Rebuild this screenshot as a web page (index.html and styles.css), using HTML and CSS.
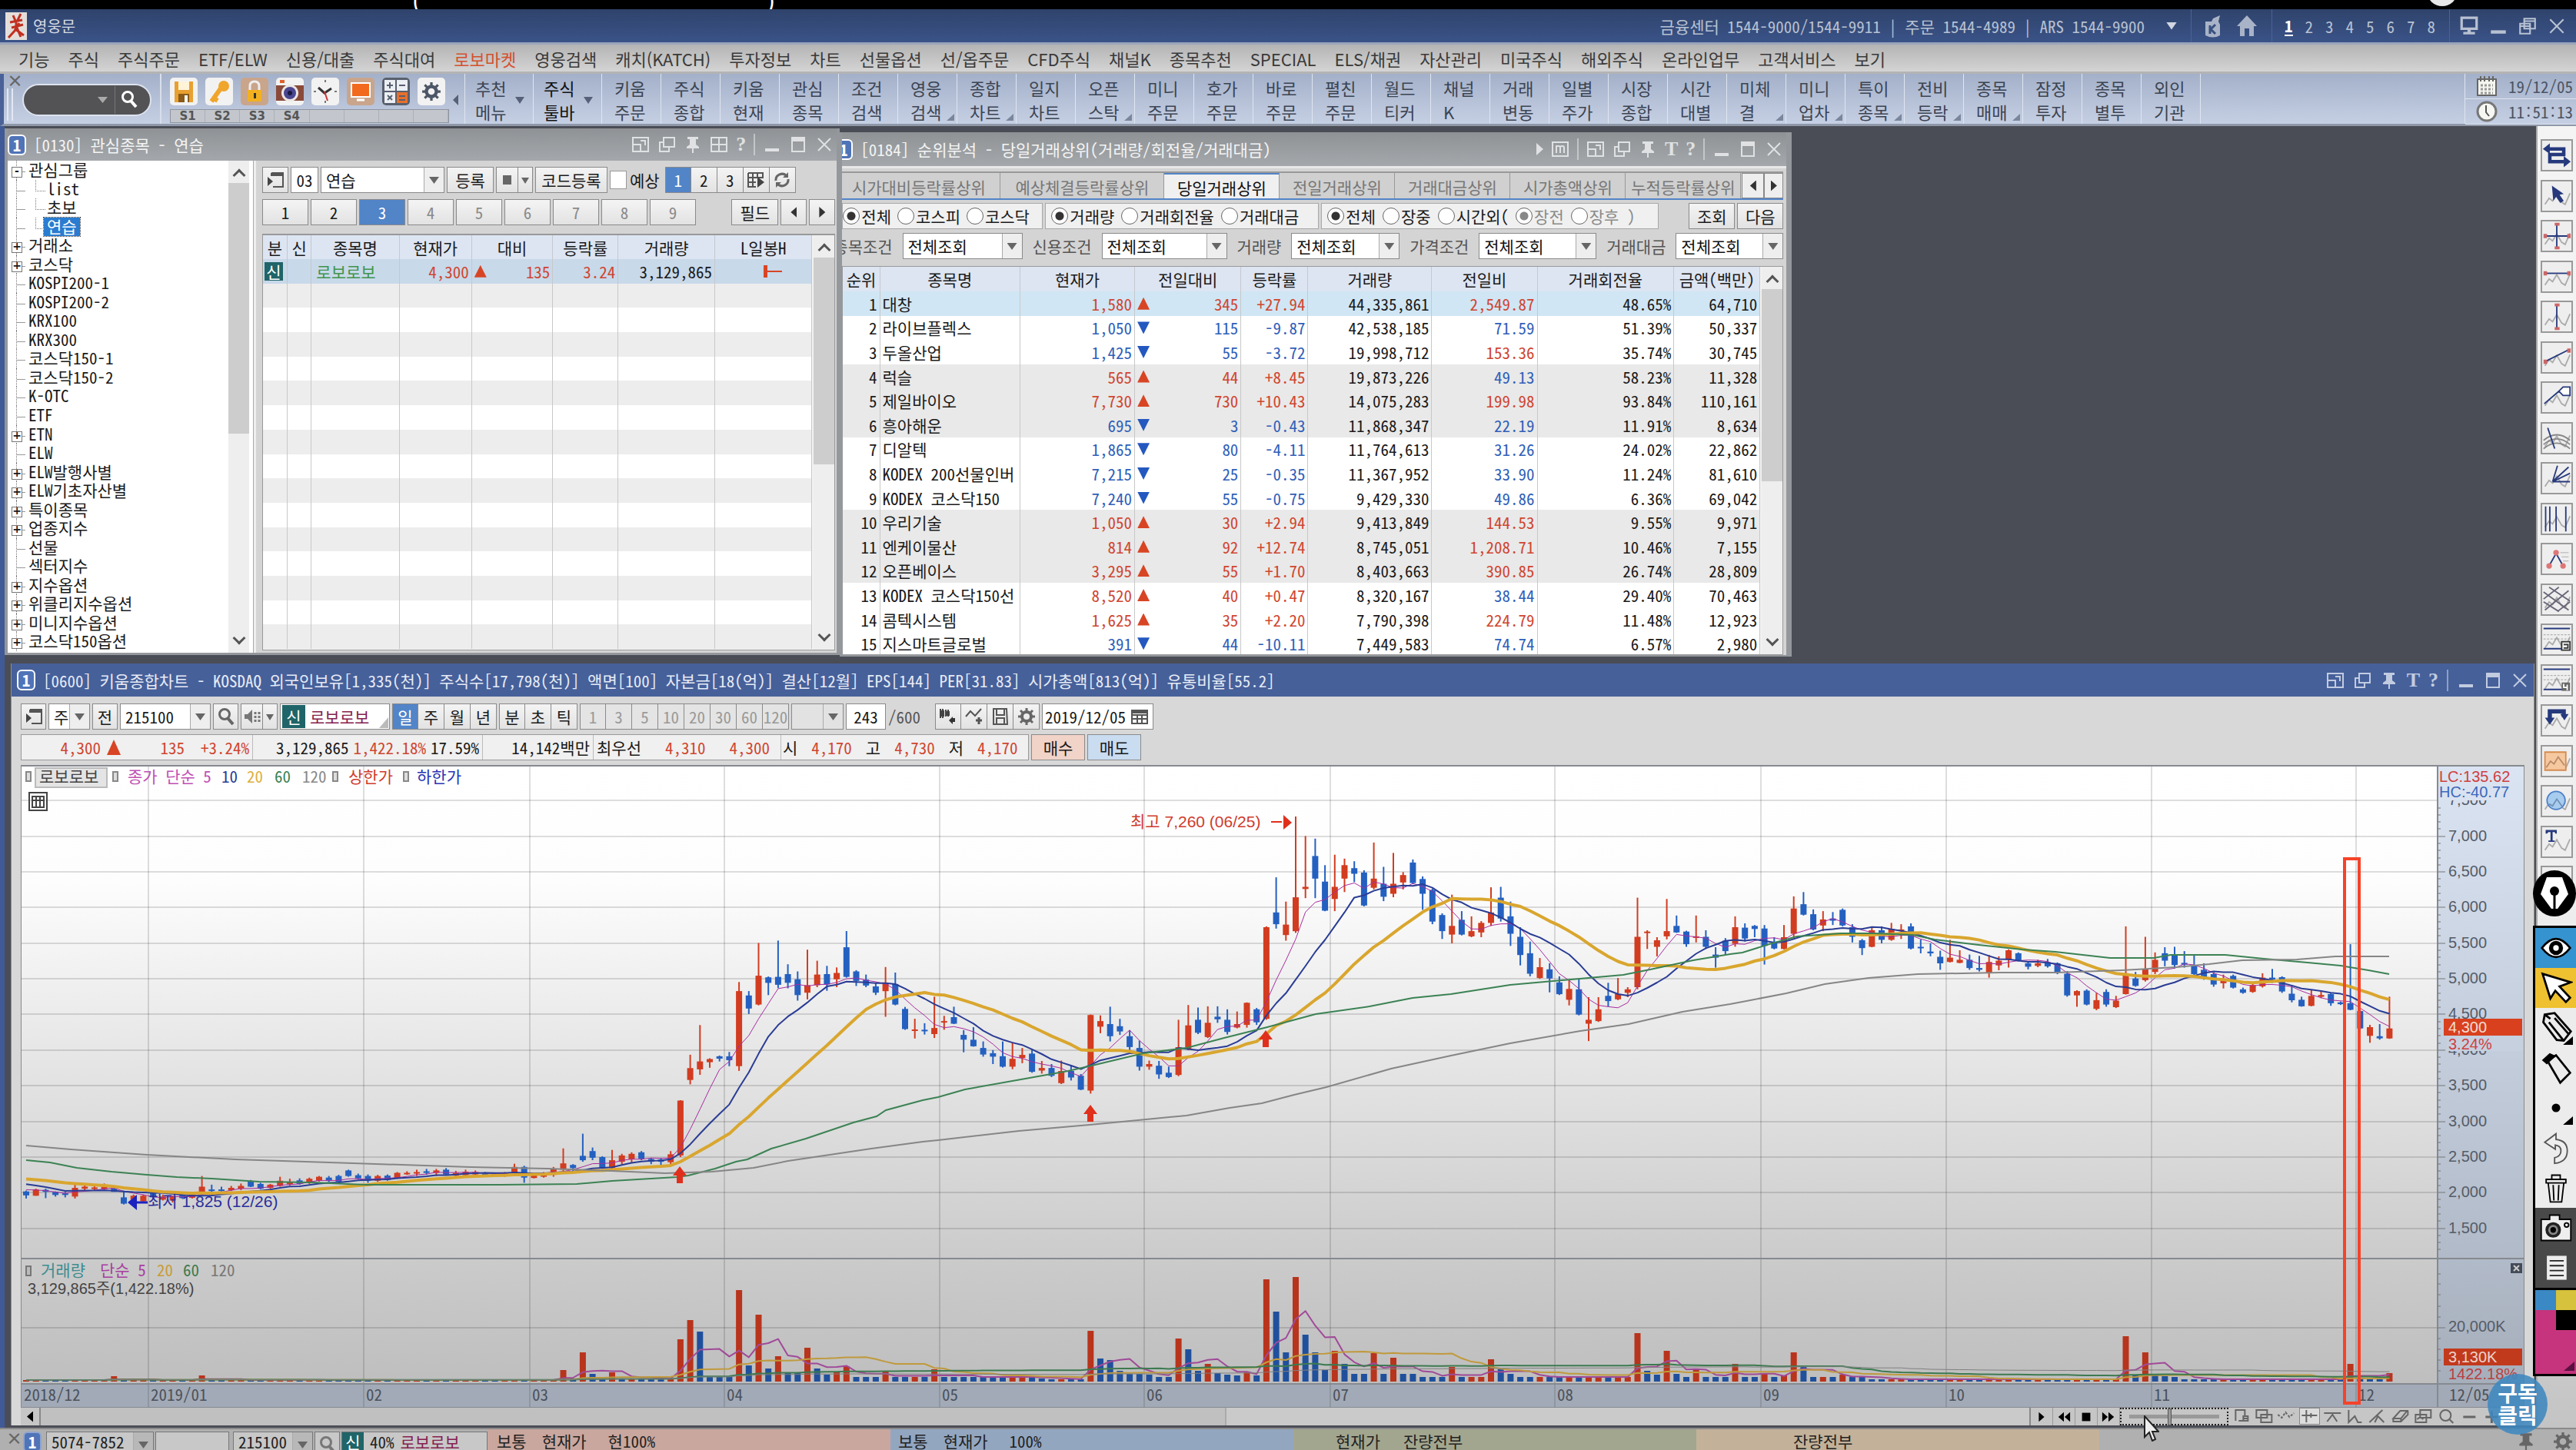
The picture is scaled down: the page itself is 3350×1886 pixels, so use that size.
FILE: index.html
```html
<!DOCTYPE html>
<html lang="ko">
<head>
<meta charset="utf-8">
<title>영웅문</title>
<link rel="stylesheet" href="styles.css">
</head>
<body>
<svg class="defs" aria-hidden="true">
  <symbol id="i-fit" viewBox="0 0 24 24"><path d="M2 3h20v18H2zM2 12h10v9M12 7h6v6" fill="none" stroke="currentColor" stroke-width="2"/></symbol>
  <symbol id="i-copy" viewBox="0 0 24 24"><path d="M8 3h14v12H8zM8 9H3v12h12v-6" fill="none" stroke="currentColor" stroke-width="2"/></symbol>
  <symbol id="i-pin" viewBox="0 0 24 24"><path d="M5 2h14v3h-3v7l4 3v2h-7v6h-2v-6H4v-2l4-3V5H5z" fill="currentColor"/></symbol>
  <symbol id="i-grid" viewBox="0 0 24 24"><path d="M2 3h20v18H2zM12 3v18M2 12h20" fill="none" stroke="currentColor" stroke-width="2"/></symbol>
  <symbol id="i-m" viewBox="0 0 24 24"><path d="M2 3h20v18H2zM7 17V8h3q2 0 2 2v7M12 10q0-2 2-2h1q2 0 2 2v7" fill="none" stroke="currentColor" stroke-width="2"/></symbol>
  <symbol id="i-min" viewBox="0 0 24 24"><path d="M3 17h18v4H3z" fill="currentColor"/></symbol>
  <symbol id="i-max" viewBox="0 0 24 24"><path d="M4 3h16v18H4zM4 6h16" fill="none" stroke="currentColor" stroke-width="2"/><path d="M3 3h18v5H3z" fill="currentColor"/></symbol>
  <symbol id="i-close" viewBox="0 0 24 24"><path d="M4 4l16 16M20 4L4 20" fill="none" stroke="currentColor" stroke-width="2"/></symbol>
  <symbol id="i-search" viewBox="0 0 24 24"><circle cx="10" cy="9" r="6.500" fill="none" stroke="currentColor" stroke-width="3"/><path d="M14 14l7 8" stroke="currentColor" stroke-width="4"/></symbol>
  <symbol id="i-gear" viewBox="0 0 24 24"><circle cx="12" cy="12" r="6" fill="none" stroke="currentColor" stroke-width="4"/><path d="M12 1v5M12 18v5M1 12h5M18 12h5M4 4l4 4M16 16l4 4M20 4l-4 4M8 16l-4 4" stroke="currentColor" stroke-width="3"/></symbol>
  <symbol id="i-panel" viewBox="0 0 24 24"><path d="M7 3h15v18H9M7 3v4" fill="none" stroke="#555" stroke-width="2"/><path d="M7 3h15v4H7z" fill="#555"/><path d="M2 8l7 6-7 6z" fill="#444"/></symbol>
  <symbol id="i-cal" viewBox="0 0 24 24"><path d="M2 4h20v17H2zM2 10h20M2 15h20M9 9v12M15 9v12" fill="none" stroke="#555" stroke-width="2"/><path d="M2 3h20v5H2z" fill="#555"/></symbol>
  <symbol id="i-wave" viewBox="0 0 42 42"><path d="M4 33l6-9 5 4 6-10 7 12 5 3 7-16" fill="none" stroke="#aaa" stroke-width="2"/></symbol>
</svg>

<div class="letterbox"><span>(</span><span>)</span><i></i></div>

<header class="titlebar">
  <svg class="logo" viewBox="0 0 28 36"><path d="M0 0h28v36H0z" fill="#e4dedb"/><path d="M10 4l3 7M20 2l-5 10M6 13l16-3M8 20l15-4M14 10v12L4 33M15 20l5 12M18 14l-5 8 11 8" fill="none" stroke="#c03020" stroke-width="3"/></svg>
  <h1>영웅문</h1>
  <p class="phones">금융센터 1544-9000/1544-9911 | 주문 1544-4989 | ARS 1544-9900</p>
  <button class="tri-down" aria-label="전화번호"></button>
  <div class="tgroup">
    <button aria-label="키움"><svg viewBox="0 0 24 32"><path d="M2 10h8l2-4 9-4-2 8 2 4v14q-9 5-19 0z" fill="#a9b3c8"/><path d="M8 15v11M15 14l-6 6 6 6" stroke="#38507f" stroke-width="3" fill="none"/></svg></button>
    <button aria-label="홈"><svg viewBox="0 0 28 32"><path d="M14 2L1 16h4v13h6V19h6v10h6V16h4z" fill="#a9b3c8"/></svg></button>
  </div>
  <nav class="screens tgroup"><a href="#" class="on">1</a><a href="#">2</a><a href="#">3</a><a href="#">4</a><a href="#">5</a><a href="#">6</a><a href="#">7</a><a href="#">8</a></nav>
  <div class="tgroup wins">
    <button aria-label="모니터"><svg viewBox="0 0 24 24"><path d="M3 2h18v13H3z" fill="none" stroke="currentColor" stroke-width="3"/><path d="M10 15h4v4h5v3H5v-3h5z" fill="currentColor"/></svg></button>
    <button aria-label="최소화"><svg><use href="#i-min"/></svg></button>
    <button aria-label="이전 크기"><svg viewBox="0 0 24 24"><path d="M8 3h13v12H8zM8 6h13M3 9h12v12H3zM3 12h12" fill="none" stroke="currentColor" stroke-width="2"/></svg></button>
    <button aria-label="닫기"><svg><use href="#i-close"/></svg></button>
  </div>
</header>

<nav class="menubar" id="menubar"></nav>

<div class="toolbar">
  <div class="grip"><b>×</b><i></i></div>
  <div class="searchbox"><input aria-label="화면 검색"><span class="caret"></span><button aria-label="검색"><svg><use href="#i-search"/></svg></button></div>
  <div class="quick">
    <div class="apps">
      <button aria-label="저장"><svg viewBox="0 0 36 36"><path d="M6 5h24v27H6z" fill="#e8a030"/><path d="M11 5h14v11H11z" fill="#fff3d8"/><path d="M11 21h14v11H11z" fill="#8a5a18"/><path d="M19 23h4v9h-4z" fill="#fff"/></svg></button>
      <button aria-label="열쇠"><svg viewBox="0 0 36 36"><circle cx="24" cy="11" r="7" fill="#f0a52c"/><path d="M20 14L8 31M10 26l6 4" stroke="#f0a52c" stroke-width="6"/></svg></button>
      <button class="tan" aria-label="잠금"><svg viewBox="0 0 36 36"><path d="M12 16v-5q0-6 6-6t6 6v5" fill="none" stroke="#eee" stroke-width="3"/><path d="M9 16h18v15H9z" fill="#f2b020"/><path d="M17 20h3v7h-3z" fill="#333"/></svg></button>
      <button aria-label="화면 캡처"><svg viewBox="0 0 36 36"><path d="M0 10h36v20H0z" fill="#8a4a3a"/><path d="M5 3h6v4H5z" fill="#e0602c"/><circle cx="18" cy="20" r="11" fill="#ece7e4"/><circle cx="18" cy="20" r="8" fill="#4a4590"/><circle cx="18" cy="20" r="3" fill="#1a1a40"/></svg></button>
      <button aria-label="시계"><svg viewBox="0 0 36 36"><path d="M9 13l8 7 9-6" fill="none" stroke="#333" stroke-width="3"/><path d="M17 18l4 12" stroke="#c33" stroke-width="2"/><path d="M18 3v3M18 30v3M3 18h3M30 18h3" stroke="#777" stroke-width="2"/></svg></button>
      <button class="tan" aria-label="화면"><svg viewBox="0 0 36 36"><path d="M6 7h24v18H6z" fill="#f26a1e" stroke="#fff" stroke-width="2"/><path d="M13 29h10" stroke="#fff" stroke-width="3"/></svg></button>
      <button aria-label="계산기"><svg viewBox="0 0 36 36"><path d="M0 0h36v36H0z" fill="#58606e"/><path d="M3 3h14v14H3zM19 3h14v14H19zM3 19h14v14H3z" fill="#eceff3"/><path d="M19 19h14v14H19z" fill="#e8702c"/><path d="M6 10h8M10 6v8M22 10h8M7 23l6 6M13 23l-6 6M22 24h8M22 29h8" stroke="#58606e" stroke-width="2"/></svg></button>
      <button aria-label="설정"><svg class="gear"><use href="#i-gear"/></svg></button>
    </div>
    <div class="slots"><span>S1</span><span>S2</span><span>S3</span><span>S4</span><span></span><span></span><span></span><span></span></div>
  </div>
  <button class="fold" aria-label="접기"></button>
  <div class="tools" id="tools"></div>
  <div class="clock">
    <p><svg viewBox="0 0 28 28"><path d="M2 5h24v21H2z" fill="#f4f4f0" stroke="#666" stroke-width="2"/><path d="M6 1v7M11 1v7M17 1v7M22 1v7" stroke="#666" stroke-width="2"/><path d="M6 13h16M6 18h16M6 23h16" stroke="#999" stroke-width="3" stroke-dasharray="3 2"/></svg><time>19/12/05</time></p>
    <p><svg viewBox="0 0 28 28"><circle cx="14" cy="14" r="12" fill="#f6f6f2" stroke="#777" stroke-width="3"/><path d="M13 6v9l4 5" fill="none" stroke="#555" stroke-width="2"/></svg><time>11:51:13</time></p>
  </div>
</div>

<main>
  <div class="workspace">
    <div class="upper">
      <section class="win watch">
        <header class="bar"><b class="no">1</b><h2>[0130] 관심종목 - 연습</h2>
          <span class="ctl"><svg><use href="#i-fit"/></svg><svg><use href="#i-copy"/></svg><svg><use href="#i-pin"/></svg><svg><use href="#i-grid"/></svg><em>?</em><s></s><svg><use href="#i-min"/></svg><svg><use href="#i-max"/></svg><svg><use href="#i-close"/></svg></span></header>
        <div class="watch-body">
          <div class="tree-pane"><ul class="tree" id="tree"></ul><div class="vscroll"><i></i></div></div>
          <div class="panel">
            <div class="row">
              <button class="w-sm" aria-label="펼침"><svg><use href="#i-panel"/></svg></button>
              <input class="w-no" value="03" aria-label="그룹 번호">
              <span class="combo w-name"><select aria-label="관심그룹"><option>연습</option></select></span>
              <button class="w-reg">등록</button>
              <span class="split"><button class="stop" aria-label="정지"><i></i></button><button class="tri" aria-label="더보기"></button></span>
              <button class="w-code">코드등록</button>
              <label class="chk"><input type="checkbox">예상</label>
              <span class="split three"><button class="on">1</button><button>2</button><button>3</button><button aria-label="표"><svg viewBox="0 0 24 24"><path d="M2 3h19v7M2 3v18h10M2 9h19M2 15h10M8 3v18M14 3v7" fill="none" stroke="#555" stroke-width="2"/><path d="M14 8l9 7-9 7z" fill="#444"/></svg></button><button aria-label="새로고침"><svg viewBox="0 0 24 24"><path d="M4 13a8 8 0 0 1 14-6M20 11a8 8 0 0 1-14 6" fill="none" stroke="#666" stroke-width="3"/><path d="M20 2v7h-7zM4 22v-7h7z" fill="#666"/></svg></button></span>
            </div>
            <div class="row pages"><button>1</button><button>2</button><button class="on">3</button><button class="dim">4</button><button class="dim">5</button><button class="dim">6</button><button class="dim">7</button><button class="dim">8</button><button class="dim">9</button><span class="grow"></span><button class="w-reg">필드</button><button class="nav-b l" aria-label="이전"></button><button class="nav-b r" aria-label="다음"></button></div>
            <div class="gridwrap">
              <table class="watch-table" id="watch">
                <colgroup><col class="a1"><col class="a2"><col class="a3"><col class="a4"><col class="a5"><col class="a6"><col class="a7"><col class="a8"></colgroup>
                <thead><tr><th>분</th><th>신</th><th>종목명</th><th>현재가</th><th>대비</th><th>등락률</th><th>거래량</th><th>L일봉H</th></tr></thead>
                <tbody><tr class="sel"><td><b class="tag">신</b></td><td></td><td class="green">로보로보</td><td class="num up">4,300</td><td class="up"><span class="chg"><i class="mk-up"></i>135</span></td><td class="num up">3.24</td><td class="num">3,129,865</td><td><i class="bar-h"></i></td></tr></tbody>
              </table>
              <div class="vscroll"><i></i></div>
            </div>
          </div>
        </div>
      </section>

      <section class="win rank">
        <header class="bar"><b class="no">1</b><h2>[0184] 순위분석 - 당일거래상위(거래량/회전율/거래대금)</h2>
          <span class="ctl"><i class="play"></i><svg><use href="#i-m"/></svg><s></s><svg><use href="#i-fit"/></svg><svg><use href="#i-copy"/></svg><svg><use href="#i-pin"/></svg><em>T</em><em>?</em><s></s><svg><use href="#i-min"/></svg><svg><use href="#i-max"/></svg><svg><use href="#i-close"/></svg></span></header>
        <div class="rank-body">
          <div class="tabs"><button class="t1">시가대비등락률상위</button><button class="t2">예상체결등락률상위</button><button class="active">당일거래상위</button><button>전일거래상위</button><button>거래대금상위</button><button>시가총액상위</button><button>누적등락률상위</button><span class="split"><button class="nav-b l" aria-label="이전 탭"></button><button class="nav-b r" aria-label="다음 탭"></button></span></div>
          <div class="row filters">
            <fieldset class="f1"><label><input type="radio" name="m" checked>전체</label><label><input type="radio" name="m">코스피</label><label><input type="radio" name="m">코스닥</label></fieldset>
            <fieldset class="f2"><label><input type="radio" name="k" checked>거래량</label><label><input type="radio" name="k">거래회전율</label><label><input type="radio" name="k">거래대금</label></fieldset>
            <fieldset class="f3"><label><input type="radio" name="t" checked>전체</label><label><input type="radio" name="t">장중</label><label><input type="radio" name="t">시간외(</label><label class="dim"><input type="radio" name="o" checked disabled>장전</label><label class="dim"><input type="radio" name="o" disabled>장후 )</label></fieldset>
            <span class="grow"></span><button class="w-q">조회</button><button class="w-q">다음</button>
          </div>
          <div class="row conds">
            <label class="first" for="c1">종목조건</label><span class="combo c1"><select id="c1"><option>전체조회</option></select></span>
            <label for="c2">신용조건</label><span class="combo c2"><select id="c2"><option>전체조회</option></select></span>
            <label for="c3">거래량</label><span class="combo c3"><select id="c3"><option>전체조회</option></select></span>
            <label for="c4">가격조건</label><span class="combo c4"><select id="c4"><option>전체조회</option></select></span>
            <label for="c5">거래대금</label><span class="combo c5"><select id="c5"><option>전체조회</option></select></span>
          </div>
          <div class="gridwrap">
            <table class="rank-table">
              <colgroup><col class="b1"><col class="b2"><col class="b3"><col class="b4"><col class="b5"><col class="b6"><col class="b7"><col class="b8"><col class="b9"></colgroup>
              <thead><tr><th>순위</th><th>종목명</th><th>현재가</th><th>전일대비</th><th>등락률</th><th>거래량</th><th>전일비</th><th>거래회전율</th><th>금액(백만)</th></tr></thead>
              <tbody id="rank"></tbody>
            </table>
            <div class="vscroll"><i></i></div>
          </div>
        </div>
      </section>
    </div>

    <section class="win chartwin">
      <header class="bar"><b class="no">1</b><h2>[0600] 키움종합차트 - KOSDAQ 외국인보유[1,335(천)] 주식수[17,798(천)] 액면[100] 자본금[18(억)] 결산[12월] EPS[144] PER[31.83] 시가총액[813(억)] 유통비율[55.2]</h2>
        <span class="ctl"><svg><use href="#i-fit"/></svg><svg><use href="#i-copy"/></svg><svg><use href="#i-pin"/></svg><em>T</em><em>?</em><s></s><svg><use href="#i-min"/></svg><svg><use href="#i-max"/></svg><svg><use href="#i-close"/></svg></span></header>
      <div class="row chart-tools">
        <button class="w-ic" aria-label="펼침"><svg><use href="#i-panel"/></svg></button>
        <span class="combo w-ju"><select aria-label="구분"><option>주</option></select></span>
        <button class="w-ic">전</button>
        <span class="combo w-cd"><select aria-label="종목코드"><option>215100</option></select></span>
        <button class="w-ic" aria-label="종목 검색"><svg class="grey"><use href="#i-search"/></svg></button>
        <span class="split"><button class="w-hf" aria-label="소리"><svg viewBox="0 0 24 24"><path d="M2 9h4l6-6v18l-6-6H2z" fill="#777"/><path d="M16 6v3M16 11v3M16 16v3M21 6v3M21 11v3M21 16v3" stroke="#777" stroke-width="3"/></svg></button><button class="tri w-nr" aria-label="소리 설정"></button></span>
        <span class="name"><b class="tag">신</b>로보로보</span>
        <span class="split p3"><button class="on">일</button><button>주</button><button>월</button><button>년</button></span>
        <span class="split p3"><button>분</button><button>초</button><button>틱</button></span>
        <span class="split p3 dim"><button>1</button><button>3</button><button>5</button><button>10</button><button>20</button><button>30</button><button>60</button><button>120</button></span>
        <span class="combo off w-mn"><select aria-label="분 단위" disabled><option></option></select></span>
        <input class="w-ct" value="243" aria-label="봉 개수"><span class="total">/600</span>
        <span class="split p3"><button aria-label="봉"><svg viewBox="0 0 24 24"><path d="M2 2v12M5 2v12M9 3v9M12 3v9" stroke="#444" stroke-width="2"/><path d="M3 4h4v8H3zM10 5h4v6h-4z" fill="#444"/><path d="M21 14h-3v-2l-5 5 5 5v-3h3z" fill="#333"/></svg></button><button aria-label="선"><svg viewBox="0 0 24 24"><path d="M1 12l6-7 6 6 8-9" fill="none" stroke="#555" stroke-width="2"/><path d="M14 17h8M18 13v9" stroke="#555" stroke-width="3"/></svg></button><button aria-label="저장"><svg viewBox="0 0 24 24"><path d="M3 2h17l1 20H3zM7 2h10v8H7zM7 14h10v8H7z" fill="none" stroke="#555" stroke-width="2"/></svg></button><button aria-label="설정"><svg class="grey"><use href="#i-gear"/></svg></button></span>
        <span class="date"><input value="2019/12/05" aria-label="날짜"><svg><use href="#i-cal"/></svg></span>
      </div>
      <div class="row quote">
        <div class="quote-box">
          <p class="q1 up"><span>4,300</span><i class="mk-up"></i><span class="v1">135</span><span class="v2">+3.24%</span></p>
          <p class="q2"><span>3,129,865</span><span class="up">1,422.18%</span><span>17.59%</span></p>
          <p class="q3"><span>14,142백만</span></p>
          <p class="q4"><span>최우선</span><span class="up">4,310</span><span class="up">4,300</span></p>
          <p class="q5"><span>시</span><span class="up">4,170</span><span>고</span><span class="up">4,730</span><span>저</span><span class="up">4,170</span></p>
        </div>
        <button class="buy">매수</button><button class="sell">매도</button>
      </div>
      <svg class="chart" id="chart" viewBox="27 996 3256 836" role="img" aria-label="로보로보 일봉 차트"></svg>
      <div class="hscroll">
        <button class="nav-b l" aria-label="왼쪽"></button><span class="track"></span><span class="thumb"></span>
        <div class="play-ctl">
          <button aria-label="재생"><svg viewBox="0 0 20 20"><path d="M6 3l8 7-8 7z"/></svg></button><button aria-label="뒤로"><svg viewBox="0 0 20 20"><path d="M10 3v14l-8-7zM19 3v14l-8-7z"/></svg></button><button aria-label="정지"><svg viewBox="0 0 20 20"><path d="M4 4h12v12H4z"/></svg></button><button aria-label="앞으로"><svg viewBox="0 0 20 20"><path d="M1 3v14l8-7zM10 3v14l8-7z"/></svg></button>
        </div>
        <input type="range" value="45" aria-label="속도">
        <div class="draw-ctl">
          <svg viewBox="0 0 24 20"><path d="M5 16V2h12v8M9 16h12v-6h-6v6M15 13h6"/></svg><svg viewBox="0 0 24 20"><path d="M2 2h14v10H2zM8 8h14v10H8z"/></svg><svg viewBox="0 0 24 20"><path d="M1 8l5 4 5-7 5 6 6-5" stroke-dasharray="3 2"/></svg><svg viewBox="0 0 24 20" class="pressed"><path d="M2 9h20M8 2v16M14 6v6"/></svg><svg viewBox="0 0 24 20"><path d="M1 6h22M5 17l7-9 6 9"/></svg><svg viewBox="0 0 24 20"><path d="M4 2v16l8-8 4 8h5"/></svg><svg viewBox="0 0 24 20"><path d="M1 18L18 2M8 18l4-8 8 8"/></svg><svg viewBox="0 0 24 20"><path d="M2 13L11 3h9l-8 10zM2 13v4h10v-4M12 17l9-9V3"/></svg><svg viewBox="0 0 24 20"><path d="M8 2h14v10H8zM2 8h14v10H2zM4 14l4-3 4 3"/></svg><svg viewBox="0 0 24 20"><circle cx="11" cy="9" r="7"/><path d="M16 14l5 5"/></svg><svg viewBox="0 0 24 20"><path d="M4 11h16" stroke-width="3"/></svg><svg viewBox="0 0 24 20"><path d="M4 11h16M12 3v16" stroke-width="3"/></svg>
        </div>
      </div>
    </section>
  </div>

  <aside class="side"><div class="side-tools" id="side"></div></aside>

  <div class="palette">
    <button class="pen" aria-label="펜"><svg viewBox="0 0 56 60"><ellipse cx="28" cy="30" rx="28" ry="30"/><path d="M18 9h20l8 22-14 19h-8L10 31z" fill="#fff"/><path d="M28 28v22" stroke="#000" stroke-width="3"/><circle cx="28" cy="27" r="6"/></svg></button>
    <div class="pal-body">
      <button class="blue" aria-label="보기"><svg viewBox="0 0 48 48"><path d="M4 24Q24-2 44 24 24 50 4 24z" fill="#fff" stroke="#000" stroke-width="3"/><circle cx="24" cy="24" r="10"/><circle cx="24" cy="24" r="4" fill="#fff"/></svg></button>
      <button class="yellow" aria-label="선택"><svg viewBox="0 0 48 48"><path d="M5 4l40 12-16 6 15 16-6 6-15-16-7 11z" fill="#fff" stroke="#000" stroke-width="3"/></svg></button>
      <button aria-label="연필"><svg viewBox="0 0 48 48"><path d="M8 5l14-2 23 26-10 13-10-1L6 16zM14 16l20 25M22 10l21 24M8 5l8 6" fill="none" stroke="#000" stroke-width="3"/><path d="M48 48V36L34 48z"/></svg></button>
      <button aria-label="지우개"><svg viewBox="0 0 48 48"><path d="M12 14l12-8 20 25-14 14z" fill="none" stroke="#000" stroke-width="3"/><path d="M4 13L15 3l9 4-13 12z"/></svg></button>
      <button aria-label="굵기"><svg viewBox="0 0 48 48"><circle cx="24" cy="24" r="6"/><path d="M48 48V36L34 48z"/></svg></button>
      <button aria-label="실행 취소"><svg viewBox="0 0 48 48"><path d="M8 16L24 4v8q16 2 16 16 0 16-18 18v-8q9-2 9-10 0-7-8-8v6z" fill="#eee" stroke="#555" stroke-width="2"/></svg></button>
      <button aria-label="삭제"><svg viewBox="0 0 48 48"><path d="M10 12h28v5H10zM18 12V6h12v6M13 18l3 26h16l3-26M20 20l1 22M28 20l-1 22" fill="none" stroke="#000" stroke-width="2"/></svg></button>
      <button class="dark" aria-label="캡처"><svg viewBox="0 0 48 48"><path d="M3 12h12V6h14v6h16v30H3z" fill="#eee" stroke="#000" stroke-width="2"/><circle cx="20" cy="27" r="11" fill="#222"/><circle cx="20" cy="27" r="7" fill="#888"/><circle cx="20" cy="27" r="4"/><circle cx="39" cy="20" r="3" fill="none" stroke="#000" stroke-width="2"/></svg></button>
      <button class="dark" aria-label="목록"><svg viewBox="0 0 48 48"><path d="M11 7h28v34H11z" fill="#eee"/><path d="M15 14h20M15 21h20M15 28h20M15 35h20" stroke="#222" stroke-width="2"/></svg></button>
      <div class="swatches"><i class="s-b"></i><i class="s-y"></i><i class="s-k"></i></div>
    </div>
  </div>
  <div class="bubble">구독<br>클릭</div>
  <svg class="cursor" viewBox="0 0 20 34"><path d="M1 1v27l6-6 4 11 4-2-4-10h8z" fill="#eee" stroke="#222" stroke-width="2"/></svg>
</main>

<footer class="orderbar">
  <b class="x">×</b><b class="no">1</b>
  <span class="combo o1"><select aria-label="계좌"><option>5074-7852</option></select></span>
  <input class="o2" type="password" aria-label="비밀번호">
  <span class="combo o3"><select aria-label="주문 종목"><option>215100</option></select></span>
  <button class="w-ic" aria-label="검색"><svg class="grey"><use href="#i-search"/></svg></button>
  <span class="oname"><b class="tag">신</b><span>40%</span><em>로보로보</em></span>
  <p class="z pink"><span>보통</span><span>현재가</span><span>현100%</span></p>
  <p class="z sky"><span>보통</span><span>현재가</span><span>100%</span></p>
  <p class="z olive"><span>현재가</span><span>잔량전부</span></p>
  <p class="z sand"><span>잔량전부</span></p>
  <span class="grow"></span>
  <svg class="foot-ic"><use href="#i-pin"/></svg><svg class="foot-ic"><use href="#i-gear"/></svg>
</footer>
<script src="script.js"></script>
</body>
</html>
```
FILE: styles.css
```css
* { box-sizing: border-box; margin: 0; padding: 0; }
html { height: 100%; }
body { min-height: 100%; display: flex; flex-direction: column; overflow-x: hidden; background: #3f5a96;
  font: 21px/24px "Noto Sans Mono CJK KR", "Noto Sans CJK KR", monospace; color: #1a1a1a; }
button, input, select { font: inherit; color: inherit; border: 0; background: none; border-radius: 0; }
h1, h2 { font: inherit; white-space: nowrap; }
i, em { font-style: normal; }
ul { list-style: none; }
a { color: inherit; text-decoration: none; }
.defs { position: absolute; width: 0; height: 0; }
.up { color: #cf4630; }
.down { color: #3060b8; }
.dim { color: #8a8a8a; }
.grow { flex: 1; }
.grey { color: #777; }

.letterbox { height: 12px; flex: none; background: #000; color: #fff; overflow: hidden; display: flex; align-items: flex-end; position: relative; padding-left: 534px; gap: 444px; font-size: 32px; line-height: 22px; }
.letterbox i { position: absolute; right: 154px; bottom: 4px; width: 40px; height: 40px; border-radius: 50%; background: #e8e8e8; }

.titlebar { height: 43px; flex: none; display: flex; align-items: center; background: linear-gradient(#2f436b, #3a5388); color: #b8c1d2; padding: 0 12px 0 7px; }
.logo { width: 28px; height: 36px; margin-right: 8px; }
.titlebar h1 { font-size: 20px; color: #d6dbe4; }
.phones { margin-left: auto; margin-right: 28px; white-space: nowrap; }
.tri-down { width: 14px; height: 10px; background: #d0d6e2; clip-path: polygon(0 0, 100% 0, 50% 100%); }
.tgroup { display: flex; align-items: center; height: 43px; margin-left: 18px; border-left: 1px solid #4a629a; padding-left: 14px; gap: 16px; }
.tgroup button svg { width: 28px; height: 32px; display: block; }
.screens { padding-left: 16px; gap: 16px; }
.screens .on { color: #fff; font-weight: bold; border-bottom: 2px solid #fff; }
.wins { gap: 12px; padding-left: 12px; }
.wins button svg { width: 26px; height: 26px; }

.menubar { height: 41px; flex: none; display: flex; align-items: center; gap: 24px; padding: 0 0 0 24px; border-top: 3px solid #9aa4bb; border-bottom: 3px solid #b4b4b4; background: linear-gradient(#b4b4b4, #d4d4d4); white-space: nowrap; font: 22px/24px "Noto Sans CJK KR", sans-serif; color: #3a3a3a; }
.menubar .hot { color: #d4502e; }

.toolbar { height: 68px; flex: none; display: flex; background: linear-gradient(#a3b0c9, #c6d0e4); border-bottom: 3px solid #8f98a8; border-left: 5px solid #4a6298; color: #3c4452; }
.grip { width: 20px; padding-left: 4px; color: #666; line-height: 16px; }
.grip i { display: block; width: 8px; height: 42px; margin-top: 3px; border: 2px solid #e2e8f2; border-width: 0 2px; }
.searchbox { width: 168px; height: 42px; margin: 13px 11px 0 4px; border-radius: 21px; border: 2px solid #dde3ee; background: #535356; display: flex; align-items: center; }
.searchbox input { width: 96px; flex: none; }
.caret { width: 13px; height: 8px; background: #aaa; clip-path: polygon(0 0, 100% 0, 50% 100%); }
.searchbox button { margin-left: 9px; padding-left: 6px; border-left: 1px solid #777; height: 36px; color: #fff; }
.searchbox svg { width: 24px; height: 26px; }
.quick { width: 376px; border-left: 2px solid #d8dfec; padding: 5px 0 0 11px; }
.apps { display: flex; gap: 10px; }
.apps button { width: 36px; height: 36px; border-radius: 5px; background: #f2f2f2; overflow: hidden; }
.apps .tan { background: #c9a58c; }
.apps svg { width: 36px; height: 36px; display: block; }
.apps .gear { width: 26px; height: 26px; margin: 5px; color: #4c5666; }
.slots { display: flex; width: 363px; height: 18px; margin-top: 5px; background: #c3c7cd; border: 1px solid #8e949e; font: bold 15px/16px "DejaVu Sans", sans-serif; color: #555; }
.slots span { flex: 1; text-align: center; border-right: 1px solid #aab0ba; }
.fold { width: 7px; height: 14px; margin: 27px 8px 0 5px; background: #566078; clip-path: polygon(100% 0, 100% 100%, 0 50%); }
.tools { display: flex; }
.tools button { width: 77px; padding: 2px 0 0 16px; text-align: left; line-height: 31px; border-left: 1px solid #dfe5f0; position: relative; font-family: "Noto Sans CJK KR", sans-serif; font-size: 22px; }
.tools button:last-child { border-right: 1px solid #dfe5f0; width: 78px; }
.tools .wide { width: 89px; padding-left: 13px; }
.tools .bold { color: #111; }
.tools .wide::after { content: ""; position: absolute; right: 11px; top: 30px; width: 12px; height: 9px; background: #566078; clip-path: polygon(0 0, 100% 0, 50% 100%); }
.tools .more::after { content: ""; position: absolute; right: 3px; bottom: 4px; width: 10px; height: 9px; background: #7a869c; clip-path: polygon(100% 0, 100% 100%, 0 100%); }
.clock { margin-left: auto; width: 145px; border-left: 1px solid #dfe5f0; color: #4a5464; }
.clock p { height: 33px; display: flex; align-items: center; gap: 14px; padding-left: 14px; border-bottom: 1px solid #dfe5f0; }
.clock svg { width: 28px; height: 28px; }

main { flex: 1; display: flex; position: relative; margin-left: 6px; background: #4b4d56; }
.workspace { flex: 1; min-width: 0; }
.upper { display: flex; align-items: flex-start; height: 699px; }
.win { background: #d6d6d6; overflow: hidden; }
.bar { display: flex; align-items: center; height: 42px; padding-left: 0; background: linear-gradient(#8f9295, #a4a8ac); color: #f4f4f4; }
.no { flex: none; width: 24px; height: 27px; line-height: 23px; margin-right: 10px; border: 2px solid #fff; border-radius: 6px; background: #4f74b8; color: #fff; text-align: center; }
.ctl { margin-left: auto; display: flex; align-items: center; gap: 10px; padding-right: 4px; color: #dfe1e3; }
.ctl svg { width: 24px; height: 24px; }
.ctl em { font: bold 26px/26px "Liberation Serif", serif; }
.ctl s { width: 2px; height: 28px; background: currentColor; opacity: .6; }
.play { width: 9px; height: 16px; background: currentColor; clip-path: polygon(0 0, 100% 50%, 0 100%); }
.row { display: flex; align-items: center; gap: 3px; }
.row button, .row > input, .combo, .name, .date { height: 34px; border: 1px solid #8a8a8a; background: linear-gradient(#f4f4f4, #e2e2e2); white-space: nowrap; flex: none; text-align: center; }
.row > input, .combo { background: #fff; }
.row button svg { width: 24px; height: 24px; display: block; margin: auto; color: #666; }
.row button.on { background: #5284c8; color: #fff; }
.combo { display: flex; position: relative; }
.combo select { appearance: none; width: 100%; padding-left: 6px; }
.combo::before { content: ""; position: absolute; right: 0; top: 0; bottom: 0; width: 25px; border-left: 1px solid #aaa; background: #eee; }
.combo::after { content: ""; position: absolute; right: 6px; top: 12px; width: 13px; height: 9px; background: #666; clip-path: polygon(0 0, 100% 0, 50% 100%); }
.combo.off, .combo.off::before { background: #e2e2e2; }
.split { display: flex; }
.split button + button { border-left-width: 0; }
.stop i { display: block; width: 11px; height: 12px; margin: auto; background: #666; }
.tri { position: relative; width: 19px; }
.tri::after { content: ""; position: absolute; left: 4px; top: 13px; width: 10px; height: 8px; background: #666; clip-path: polygon(0 0, 100% 0, 50% 100%); }
.nav-b { position: relative; width: 34px; }
.nav-b::after { content: ""; position: absolute; left: 50%; top: 50%; width: 8px; height: 14px; margin: -7px 0 0 -4px; background: #333; }
.nav-b.l::after { clip-path: polygon(100% 0, 100% 100%, 0 50%); }
.nav-b.r::after { clip-path: polygon(0 0, 100% 50%, 0 100%); }
.vscroll { flex: none; width: 27px; background: #eee; position: relative; padding: 29px 0; }
.vscroll i { display: block; height: 56%; background: #cdcdcd; }
.vscroll::before, .vscroll::after { content: ""; position: absolute; left: 8px; width: 9px; height: 9px; border: solid #555; border-width: 3px 0 0 3px; transform: rotate(45deg); }
.vscroll::before { top: 13px; }
.vscroll::after { bottom: 13px; transform: rotate(225deg); }

.watch { width: 33%; margin-top: 3px; height: 685px; border: solid #94979b; border-width: 0 4px 3px; }
.watch-body { display: flex; height: 640px; }
.tree-pane { width: 320px; display: flex; background: #fff; padding-right: 5px; overflow: hidden; border-right: 1px solid #aaa; }
.tree { flex: 1; height: 638px; display: grid; grid-template-rows: repeat(26, minmax(0, 1fr)); grid-auto-rows: 0; }
.tree li { position: relative; padding-left: 27px; white-space: nowrap; line-height: 22px; }
.tree li::before { content: ""; position: absolute; left: 11px; top: 0; bottom: 0; width: 13px; border-left: 1px dotted #777; background: linear-gradient(#999, #999) 0 14px / 11px 1px no-repeat; }
.tree .box::after { content: "+"; position: absolute; left: 5px; top: 8px; width: 12px; height: 12px; border: 1px solid #777; background: #fff; font: bold 14px/9px "DejaVu Sans", sans-serif; text-align: center; }
.tree .open::after { content: "-"; }
.tree .sub { padding-left: 51px; }
.tree .sub::after { content: ""; position: absolute; left: 36px; top: 0; height: 14px; width: 12px; border: dotted #777; border-width: 0 0 1px 1px; }
.tree .pick span { background: #2a7cd0; color: #fff; outline: 1px dotted #333; display: inline-block; height: 24px; padding: 0 4px; margin-left: -4px; }
.panel { flex: 1; min-width: 0; display: flex; flex-direction: column; padding: 8px 2px 3px 8px; background: #d4d4d4; border-left: 3px solid #eee; }
.pages { margin-top: 8px; padding-bottom: 11px; border-bottom: 1px solid #999; }
.pages button { width: 60px; }
.w-sm { width: 34px; }
.w-hf { width: 29px; }
.w-no { width: 36px; padding: 0 6px; }
.w-name { width: 161px; }
.pages .w-reg, .w-reg { width: 61px; }
.pages .nav-b { width: 34px; }
.w-code { width: 94px; }
.chk { display: flex; align-items: center; gap: 4px; margin-right: 4px; white-space: nowrap; }
.chk input { appearance: none; width: 22px; height: 24px; background: #fff; border: 1px solid #999; }
.three button { width: 34px; }
.split:not(.three) > button:first-child { min-width: 29px; }
.gridwrap { flex: 1; min-height: 0; display: flex; align-items: stretch; gap: 2px; border: 1px solid #999; background: #f2f2f2; overflow: hidden; }
table { flex: 1; width: 100%; border-collapse: collapse; table-layout: fixed; }
th { font-weight: normal; background: #dde5f2; border-right: 1px solid #c4c8d0; white-space: nowrap; overflow: hidden; }
td { border-right: 1px solid #c8c8c8; white-space: nowrap; overflow: hidden; padding: 0 3px; }
.watch-table { height: 538px; background: #fff; }
.watch-table tr { height: 31px; }
.watch-table tbody tr:nth-child(even) { background: #ededed; }
.watch-table .sel { background: #c8d9ea; }
.watch-table .green { color: #3f9448; padding-left: 6px; }
.a1, .a2 { width: 4.4%; } .a3 { width: 16%; } .a4 { width: 13.2%; } .a5 { width: 14.8%; } .a6 { width: 11.9%; } .a7 { width: 17.6%; } .a8 { width: 17.7%; }
.num { text-align: right; }
.tag { display: inline-block; background: #1f6468; color: #fff; font-weight: normal; width: 24px; text-align: center; overflow: hidden; }
.watch-table td:first-child { padding: 0 2px; line-height: 0; }
.watch-table .tag { line-height: 24px; }
.chg { display: flex; align-items: center; justify-content: space-between; }
.mk-up, .mk-dn { width: 16px; height: 16px; display: inline-block; }
.mk-up { background: #d84524; clip-path: polygon(50% 0, 100% 100%, 0 100%); }
.mk-dn { background: #2458c0; clip-path: polygon(0 0, 100% 0, 50% 100%); }
.bar-h { display: block; width: 24px; height: 16px; margin-left: 60px; border-left: 5px solid #d84524; background: linear-gradient(#d84524, #d84524) 0 7px / 100% 2px no-repeat; }

.rank { width: 37%; flex: 0 1 1238px; margin-top: 8px; height: 682px; border: solid #94979b; border-width: 0 7px 2px 3px; }
.rank .bar { height: 44px; }
.rank .no { margin-left: -10px; }
.rank-body { height: 636px; background: #d4d4d4; border-top: 3px solid #e8e8e8; padding: 4px 4px 0 0; display: flex; flex-direction: column; }
.tabs { display: flex; border-bottom: 2px solid #5284c8; border-top: 2px solid #999; height: 37px; color: #777; position: relative; overflow: hidden; flex: none; }
.tabs > button { flex: 0 0 150px; height: 35px; background: #d0d0d0; border-right: 1px solid #999; white-space: nowrap; text-align: center; overflow: hidden; }
.tabs .t1 { flex-basis: 206px; padding-right: 6px; }
.tabs .t2 { flex-basis: 213px; }
.tabs .active { background: #f0f0f0; color: #111; border-top: 2px solid #5284c8; }
.tabs .split { position: absolute; right: 0; top: 0; }
.tabs .split button { width: 25px; height: 33px; background: #eee; border: 1px solid #888; }
.filters { margin-top: 4px; flex: none; }
fieldset { height: 34px; display: flex; align-items: center; background: #f0f0f0; border: 1px solid #a8a8a8; gap: 4px; flex: none; overflow: hidden; }
fieldset label { display: flex; align-items: center; gap: 2px; white-space: nowrap; }
.f1 { width: 261px; } .f2 { width: 356px; } .f3 { width: 439px; }
.f1 { gap: 8px; } .f2, .f3 { padding-left: 7px; gap: 9px; }
input[type=radio] { appearance: none; width: 22px; height: 22px; border: 1px solid #666; border-radius: 50%; background: #fff; flex: none; }
input[type=radio]:checked { background: radial-gradient(#333 0 5px, #fff 6px); }
input[type=radio]:disabled:checked { background: radial-gradient(#888 0 5px, #fff 6px); }
.w-q { width: 60px; }
.conds { margin-top: 5px; color: #555; gap: 5px; justify-content: space-between; flex: none; white-space: nowrap; }
.conds .first { margin-left: -12px; }
.conds .combo { color: #111; }
.c1 { width: 156px; } .c2 { width: 163px; } .c3 { width: 141px; } .c4 { width: 153px; } .c5 { width: 140px; }
.rank .gridwrap { margin-top: 9px; }
.rank-table { height: 506px; background: #fff; }
.rank-table th { height: 32px; }
.rank-table .g { background: #e9e9e9; }
.rank-table .sel { background: #d0e6f4; }
.b1 { width: 4%; } .b2 { width: 15.3%; } .b3 { width: 12.5%; } .b4 { width: 11.6%; } .b5 { width: 7.3%; } .b6 { width: 13.5%; } .b7 { width: 11.5%; } .b8 { width: 14.9%; } .b9 { width: 9.4%; }

.chartwin { margin: 0 2px 0 8px; border: solid #8f8f8f; border-width: 0 1px; padding: 0 12px; background: #d8d8d8; }
.chartwin .bar { height: 43px; margin: 0 -12px; background: #46609a; color: #e6ebf5; padding-left: 7px; }
.chartwin .ctl { color: #c2cce0; padding-right: 6px; gap: 11px; }
.chart-tools { margin-top: 9px; }
.w-ic { width: 33px; }
.w-ju { width: 54px; } .w-cd { width: 118px; } .w-nr { width: 19px; } .w-mn { width: 68px; }
.name { width: 143px; display: flex; align-items: center; gap: 6px; color: #86204e; background: #fff !important; position: relative; }
.name .tag { width: 30px; height: 30px; line-height: 30px; margin-left: 2px; }
.name::after { content: ""; position: absolute; right: 1px; bottom: 1px; width: 12px; height: 14px; background: #bbb; clip-path: polygon(100% 0, 100% 100%, 0 100%); }
.p3 button { width: 34px; overflow: hidden; }
.p3.dim button { background: #e4e4e4; color: #999; }
.w-ct { width: 52px; text-align: right; padding: 0 2px; }
.total { margin: 0 16px 0 0; color: #555; }
.date { width: 145px; display: flex; align-items: center; background: #fff !important; }
.date input { width: 110px; padding-left: 3px; }
.date svg { width: 24px; height: 24px; margin-left: 4px; }
.quote { margin-top: 6px; margin-bottom: 6px; }
.quote-box { display: flex; height: 34px; width: 1311px; border: 1px solid #999; background: #f0f0f0; align-items: center; }
.quote-box p { display: flex; align-items: center; height: 32px; border-right: 1px solid #bbb; white-space: nowrap; justify-content: flex-end; padding-right: 4px; }
.q1 { width: 301px; } .q2 { width: 299px; gap: 6px; } .q3 { width: 144px; } .q4 { width: 244px; }
.quote-box .q4 { justify-content: space-between; padding: 0 14px 0 4px; }
.quote-box .q5 { border: 0; gap: 18px; padding-left: 2px; }
.v1 { width: 93px; text-align: right; } .v2 { width: 84px; text-align: right; }
.q1 .mk-up { margin-left: 8px; width: 18px; height: 20px; margin-right: -10px; }
.row .buy { width: 70px; background: #f1d3c8; }
.row .sell { width: 70px; background: #c9dcf0; }
.chart { display: block; width: 100%; height: auto; }
.chart text { font: 20px "Liberation Sans", "Noto Sans CJK KR", sans-serif; }
.chart .note text { font-size: 21px; }
.chart .mono text { font: 21px "Noto Sans Mono CJK KR", "Noto Sans CJK KR", monospace; }
.hscroll { height: 23px; display: flex; background: #c6c6c6; }
.hscroll > .nav-b { width: 26px; border-right: 2px solid #888; }
.hscroll .nav-b::after { background: #000; }
.track { flex: 0 1 1540px; background: #c0c0c0; }
.thumb { flex: 1; border-left: 2px solid #aaa; background: #cacaca; }
.play-ctl { display: flex; border-left: 2px solid #888; }
.play-ctl button { width: 29px; border-right: 1px solid #999; }
.play-ctl svg { width: 20px; height: 18px; }
.hscroll input { width: 141px; appearance: none; border: 2px dotted #222; }
.hscroll input::-webkit-slider-runnable-track { height: 5px; background: #999; margin: 0 10px; }
.hscroll input::-webkit-slider-thumb { appearance: none; width: 5px; height: 22px; margin-top: -8px; background: #999; border: 1px solid #555; }
.draw-ctl { display: flex; gap: 5px; padding: 1px 30px 0 4px; width: 385px; justify-content: space-between; }
.draw-ctl svg { width: 25px; height: 20px; fill: none; stroke: #666; stroke-width: 2; }
.draw-ctl .pressed { background: #ddd; outline: 1px solid #888; }

.side { width: 52px; flex: none; background: linear-gradient(#f4f4f4, #eee 60%, #c4c4c4); border-left: 2px solid #aaa; padding-top: 17px; }
.side-tools { display: flex; flex-direction: column; justify-content: space-between; align-items: center; height: 987px; }
.side-tools button { width: 42px; height: 42px; border: 2px solid #999; background: #eee; }
.side-tools svg { width: 38px; height: 38px; display: block; }
.palette { position: absolute; right: 0; top: 968px; width: 56px; }
.pen { display: block; width: 56px; height: 60px; margin-bottom: 12px; }
.pen svg { width: 56px; height: 60px; }
.pal-body { border: 3px solid #000; background: #ececec; border-right: 0; }
.pal-body button { display: flex; align-items: center; justify-content: center; width: 100%; height: 52px; }
.pal-body svg { width: 44px; height: 44px; }
.pal-body .blue { background: #3593d0; } .pal-body .yellow { background: #efc030; } .pal-body .dark { background: #494949; }
.swatches { height: 112px; border-top: 3px solid #000; background: #c5347c; display: grid; grid-template: 26px 26px 1fr / 1fr 1fr; position: relative; }
.s-b { background: #3a88c4; } .s-y { background: #d6c23c; } .s-k { grid-area: 2 / 2; background: #000; }
.swatches::after { content: ""; position: absolute; right: 2px; bottom: 4px; width: 14px; height: 12px; background: #5a1040; clip-path: polygon(100% 0, 100% 100%, 0 100%); }
.bubble { position: absolute; right: 37px; bottom: -9px; width: 78px; height: 79px; border-radius: 50%; background: #3f88bfe0; color: #fff; text-align: center; font: bold 28px/29px "Noto Sans CJK KR", sans-serif; padding-top: 10px; z-index: 2; }
.cursor { position: absolute; left: 83.2%; bottom: -18px; width: 20px; height: 34px; z-index: 2; }

.orderbar { height: 29px; flex: none; overflow: hidden; display: flex; align-items: flex-start; gap: 2px; background: #b0b0b0; border-top: 2px solid #8a8a8a; padding: 3px 4px 0 8px; color: #222; white-space: nowrap; }
.orderbar .x { width: 20px; color: #666; line-height: 16px; }
.orderbar .no { border-color: #8fa4d0; margin: 0 4px 0 0; }
.orderbar .combo, .orderbar input, .orderbar .w-ic { height: 36px; background: #c8c8c8; border: 1px solid #777; }
.orderbar select { height: 24px; line-height: 24px; }
.orderbar .combo::before { background: #b8b8b8; }
.o1 { width: 140px; } .o2 { width: 96px; } .o3 { width: 104px; margin-left: 3px; }
.orderbar .w-ic svg { width: 24px; height: 24px; }
.oname { display: flex; width: 190px; height: 36px; background: #c8c8c8; border: 1px solid #777; gap: 8px; }
.oname .tag { width: 28px; } .oname em { color: #86204e; }
.z { height: 34px; margin-top: -3px; padding-top: 3px; display: flex; gap: 20px; flex: 0 1 524px; margin-left: -2px; }
.pink { background: #c9a79e; padding-left: 12px; } .sky { background: #93a6c0; padding-left: 10px; } .olive { background: #a3a68f; padding-left: 55px; gap: 30px; } .sand { background: #c3b199; padding-left: 126px; }
.pink span:last-child, .sky span:last-child { margin-left: 8px; }
.foot-ic { width: 26px; height: 26px; color: #666; margin-right: 20px; }
.foot-ic:last-child { margin-right: 0; }
```
FILE: script.js
```js
const $ = id => document.getElementById(id);

$('menubar').innerHTML = '기능,주식,주식주문,ETF/ELW,신용/대출,주식대여,로보마켓,영웅검색,캐치(KATCH),투자정보,차트,선물옵션,선/옵주문,CFD주식,채널K,종목추천,SPECIAL,ELS/채권,자산관리,미국주식,해외주식,온라인업무,고객서비스,보기'
  .split(',').map(t => `<a href="#"${t === '로보마켓' ? ' class="hot"' : ''}>${t}</a>`).join('');

$('tools').innerHTML = '추천 메뉴 wide,주식 툴바 wide_bold,키움 주문,주식 종합,키움 현재,관심 종목,조건 검색,영웅 검색 more,종합 차트 more,일지 차트,오픈 스탁 more,미니 주문,호가 주문,바로 주문,펼친 주문,월드 티커,채널 K,거래 변동,일별 주가,시장 종합,시간 대별,미체 결 more,미니 업차 more,특이 종목 more,전비 등락 more,종목 매매 more,잠정 투자,종목 별투,외인 기관'
  .split(',').map(t => { const [a, b, c = ''] = t.split(' '); return `<button class="${c.replace('_', ' ')}">${a}<br>${b}</button>`; }).join('');

// Prefix: "-" opened group, "+" closed group, ">" child, "*" selected child.
$('tree').innerHTML = '-관심그룹,>list,>초보,*연습,+거래소,+코스닥,KOSPI200-1,KOSPI200-2,KRX100,KRX300,코스닥150-1,코스닥150-2,K-OTC,ETF,+ETN,ELW,+ELW발행사별,+ELW기초자산별,+특이종목,+업종지수,선물,섹터지수,+지수옵션,+위클리지수옵션,+미니지수옵션,+코스닥150옵션'
  .split(',').map(t => {
    const cls = { '-': 'box open', '+': 'box', '>': 'sub', '*': 'sub pick' }[t[0]];
    return `<li class="${cls || ''}"><span>${cls ? t.slice(1) : t}</span></li>`;
  }).join('');

$('watch').tBodies[0].insertAdjacentHTML('beforeend', ('<tr>' + '<td></td>'.repeat(8) + '</tr>').repeat(15));

$('rank').innerHTML = `대창|1,580|345|+27.94|44,335,861|2,549.87|48.65|64,710
라이브플렉스|1,050|115|-9.87|42,538,185|71.59|51.39|50,337
두올산업|1,425|55|-3.72|19,998,712|153.36|35.74|30,745
럭슬|565|44|+8.45|19,873,226|49.13|58.23|11,328
제일바이오|7,730|730|+10.43|14,075,283|199.98|93.84|110,161
흥아해운|695|3|-0.43|11,868,347|22.19|11.91|8,634
디알텍|1,865|80|-4.11|11,764,613|31.26|24.02|22,862
KODEX 200선물인버|7,215|25|-0.35|11,367,952|33.90|11.24|81,610
KODEX 코스닥150|7,240|55|-0.75|9,429,330|49.86|6.36|69,042
우리기술|1,050|30|+2.94|9,413,849|144.53|9.55|9,971
엔케이물산|814|92|+12.74|8,745,051|1,208.71|10.46|7,155
오픈베이스|3,295|55|+1.70|8,403,663|390.85|26.74|28,809
KODEX 코스닥150선|8,520|40|+0.47|8,320,167|38.44|29.40|70,463
콤텍시스템|1,625|35|+2.20|7,790,398|224.79|11.48|12,923
지스마트글로벌|391|44|-10.11|7,449,583|74.74|6.57|2,980`.split('\n').map((line, i) => {
  const [name, price, diff, rate, vol, prev, turn, amount] = line.split('|');
  const up = rate[0] === '+', c = up ? 'up' : 'down';
  const p = parseFloat(prev.replace(',', '')) > 100 ? 'up' : 'down';
  const row = i === 0 ? 'sel' : Math.floor(i / 3) % 2 ? 'g' : '';
  return `<tr class="${row}"><td class="num">${i + 1}</td><td>${name}</td><td class="num ${c}">${price}</td>` +
    `<td class="${c}"><span class="chg"><i class="${up ? 'mk-up' : 'mk-dn'}"></i>${diff}</span></td><td class="num ${c}">${rate}</td>` +
    `<td class="num">${vol}</td><td class="num ${p}">${prev}</td><td class="num">${turn}%</td><td class="num">${amount}</td></tr>`;
}).join('');

// Drawing tools: each is laid over the same faint price line.
const N = 'fill="none" stroke="#26397c" stroke-width="2"';
const sideIcons = [
  ['자동', `<path d="M9 12h22v8H11v10h20" fill="none" stroke="#26397c" stroke-width="5"/><path d="M11 4v15L1 12zM31 22v16l10-8z" fill="#26397c"/>`, 1],
  ['선택', `<path d="M14 6l17 12-6 1 6 9-5 3-6-9-4 6z" fill="#26397c"/>`],
  ['십자선', `<path d="M4 21h34M21 4v34" ${N}/><path d="M2 18h5v6H2zM36 18h5v6h-5zM18 2h7v4h-7zM18 36h7v4h-7z" fill="#c66"/>`],
  ['수평선', `<path d="M4 16h34" ${N}/><path d="M2 13h5v6H2zM36 13h5v6h-5z" fill="#c66"/>`],
  ['수직선', `<path d="M21 4v34" ${N}/><path d="M18 2h7v4h-7zM18 36h7v4h-7z" fill="#c66"/>`],
  ['추세선', `<path d="M4 27L38 10" ${N}/><path d="M2 24h5v6H2zM36 8h5v6h-5z" fill="#c66"/>`],
  ['연장선', `<path d="M3 30l20-17h8" ${N}/><path d="M24 12l6-6h10v12H30z" fill="#fff" stroke="#26397c" stroke-width="2"/>`],
  ['원호', `<path d="M2 24q19-16 38 0M2 30q19-16 38 0M2 36q19-16 38 0" fill="none" stroke="#888" stroke-width="2"/><path d="M8 6l10 30" ${N}/>`],
  ['팬', `<path d="M15 26L22 3M15 26L38 5M15 26l25-12M15 26h25" ${N}/>`],
  ['시간대', `<path d="M5 3v36M11 3v36M20 3v36M34 3v36" ${N}/>`],
  ['파동', `<path d="M10 31l10-18 10 18" ${N}/><circle cx="10" cy="31" r="4" fill="#d77"/><circle cx="20" cy="12" r="4" fill="#d77"/><circle cx="30" cy="31" r="4" fill="#d77"/><path d="M26 12h12M28 18h10M30 24h8" stroke="#aaa"/>`, 1],
  ['격자', `<path d="M2 10l36 26M2 24l22 14M10 3l30 20M38 8L4 36M40 24L22 38M24 3L2 20" fill="none" stroke="#667" stroke-width="2"/>`],
  ['밴드3', `<path d="M2 5h38M2 34h28" ${N}/><path d="M2 14h38M2 20h38" stroke="#999" stroke-dasharray="3 2"/><path d="M28 24h12v12H28z" fill="#eee" stroke="#333" stroke-width="2"/><path d="M31 28h6v5h-6" fill="none" stroke="#333" stroke-width="2"/>`],
  ['밴드4', `<path d="M2 5h38M2 34h28" ${N}/><path d="M2 14h38M2 20h38" stroke="#999" stroke-dasharray="3 2"/><path d="M28 24h12v12H28z" fill="#666"/><path d="M31 26v5h6M36 27v8" fill="none" stroke="#fff" stroke-width="2"/>`],
  ['되돌림', `<path d="M11 20V8h20v8" fill="none" stroke="#26397c" stroke-width="6"/><path d="M4 17h14l-7 10zM26 12h12l-6 9z" fill="#26397c"/>`],
  ['사각형', `<path d="M4 8h30v26H4z" fill="#f5c8a0" stroke="#d58b50" stroke-width="2"/><path d="M6 30l6-9 5 4 6-10 9 12" fill="none" stroke="#b98a68" stroke-width="2"/>`],
  ['원', `<ellipse cx="20" cy="20" rx="13" ry="13" fill="#a8ccee" stroke="#4a80c8" stroke-width="2"/><path d="M10 25l5 3 6-10 8 11" fill="none" stroke="#7090b8" stroke-width="2"/>`],
  ['문자', `<path d="M5 4h16v5h-2l-1-2h-3v12h3v2H9v-2h3V7H9L7 9H5z" fill="#26397c"/>`],
  ['지우기', `<path d="M20 26l12-8 6 6-12 9z" fill="#fff" stroke="#333" stroke-width="2"/>`, 1]
];
$('side').innerHTML = sideIcons.map(([label, art, plain]) =>
  `<button aria-label="${label}"><svg viewBox="0 0 42 42">${plain ? '' : '<use href="#i-wave"/>'}${art}</svg></button>`).join('');

// Daily bars: direction, high, body top, body bottom, low, in rows of the source sheet.
// base is the row of 2,000 won, won is the value of one row.
const sheets = [
  { base: 920, won: 5.543, bars: 'd 915 917 927 935,r 910 912 928 928,d 910 913 918 934,d 917 918 926 930,d 918 922 926 932,r 899 908 930 935,r 900 905 910 915,r 900 907 911 915,r 897 905 911 913,d 908 910 918 918,d 915 932 948 950,r 925 928 938 940,r 925 928 942 944,d 915 918 932 935,r 925 930 938 940,r 928 930 940 945,d 922 926 934 936,r 920 925 933 935,r 878 905 922 926,d 900 912 916 918,d 905 912 916 918,r 903 908 914 916,r 897 903 910 914,d 888 892 905 906,d 895 898 910 912,r 898 900 908 910,r 880 890 903 905,r 885 893 899 902,d 884 889 898 900,r 882 885 896 898,r 878 880 890 892,d 878 882 890 893,d 875 878 893 895,d 862 864 878 880,d 872 876 884 886,d 874 878 890 895,r 875 878 890 893,d 874 877 888 890,r 868 870 883 885,r 866 870 872 875,r 862 868 870 878,d 860 866 870 875,r 860 864 870 878,d 858 862 874 876,r 865 870 877 880,r 862 867 876 878,r 864 868 874 876,d 868 872 876 879,d 870 873 877 880,r 868 871 875 880,r 847 855 869 872,d 852 855 882 895,r 872 874 883 884,r 868 871 880 882,r 855 860 875 880,r 808 846 862 865,d 848 850 858 866,d 771 827 838 842,d 806 815 832 838,d 828 830 858 860,r 812 838 858 862,r 822 826 842 848,r 818 822 836 845,d 815 818 834 838,d 832 835 842 848,d 833 836 842 850,r 815 823 843 850,r 686 687 826 830,r 571 605 635 646,r 496 588 608 622,r 580 582 590 604,d 573 575 581 588,d 564 575 585 600,r 387 410 600 612,d 410 421 454 468,r 288 371 444 446,d 373 375 389 420,d 282 374 394 402,d 342 367 389 403,d 360 380 420 434,r 305 395 414 431,r 333 368 395 400,d 346 367 393 409,r 350 364 380 400,d 258 299 374 376,d 357 360 384 397,d 368 381 396 400,d 388 398 414 420,r 349 391 410 475,d 363 392 444 446,d 450 455 506 508,r 480 507 509 530' },
  { base: 978, won: 6.094, bars: 'd 588 603 606 614,r 527 599 613 622,r 571 583 586 603,d 550 574 589 590,d 604 615 626 655,d 597 626 641 642,d 630 645 660 665,d 650 657 665 682,d 630 664 688 690,r 632 670 688 694,r 645 661 668 680,d 648 658 700 702,r 675 691 697 704,d 682 691 709 712,r 674 698 726 728,d 684 698 713 720,d 705 709 741 742,r 568 569 743 750,r 570 583 596 611,d 550 590 618 630,d 578 595 607 615,d 604 618 643 658,d 628 645 688 697,r 674 682 688 695,d 675 686 706 716,d 688 702 712 714,r 580 643 707 710,r 546 593 647 650,d 552 580 610 613,r 549 587 620 622,d 549 573 579 587,d 556 580 608 614,r 561 590 598 600,r 540 541 592 598,d 553 556 586 592,r 365 367 578 580,d 252 333 360 370,r 308 361 385 398,r 112 298 376 380,r 157 274 279 300,d 163 203 255 300,d 224 262 329 330,r 200 274 302 330,r 209 224 255 286,d 215 231 244 263,d 236 241 317 319,r 172 255 276 280,d 228 267 297 307,r 196 267 290 298,r 240 247 264 280,d 211 218 265 268,d 250 256 290 327,d 278 281 354 360,d 335 339 376 394,r 292 364 384 404,d 330 350 384 386,r 342 376 388 390,r 353 357 379 390,r 275 333 357 364,d 274 299 347 354,d 308 342 382 410,d 367 389 431 455,d 400 427 474 480,r 438 459 484 486,d 450 464 485 517,d 480 494 521 523,r 487 509 534 547,d 487 510 568 570,r 528 580 589 629,r 528 556 583 585,d 495 525 537 550,r 484 521 533 535,r 505 510 518 528,r 299 389 505 510,r 374 377 380 417,r 390 397 412 434,r 302 376 388 395,d 340 364 379 380,d 375 377 406 412,r 340 388 391 402,d 374 389 412 417' },
  { base: 978, won: 6.094, bars: 'd 413 430 437 460,d 392 398 422 430,r 342 367 405 412,d 358 368 393 400,d 362 364 371 390,d 362 370 410 453,d 390 402 416 418,r 362 390 417 418,r 296 324 382 394,d 286 314 338 340,d 326 337 372 374,r 330 349 363 376,d 332 347 352 362,d 324 327 363 365,d 360 367 389 402,d 394 397 415 431,r 366 374 412 413,d 365 374 396 404,r 357 371 396 398,r 360 372 375 394,d 358 365 416 418,d 395 412 415 427,d 404 423 427 434,d 421 435 450 465,r 396 437 447 448,r 420 442 449 450,d 430 442 461 465,d 433 461 465 469,r 431 447 473 483,r 434 444 455 466,r 418 420 442 460,d 425 427 444 446,d 446 450 458 464,r 442 450 456 459,d 440 448 457 460,d 448 450 471 475,d 468 474 524 527,r 512 514 524 550,d 510 513 545 547,r 518 535 555 558,d 510 516 545 550,r 525 536 551 553,r 365 473 521 522,d 470 485 502 504,r 389 464 489 492,r 425 442 470 475,d 413 427 444 457,d 412 429 454 462,d 422 449 453 460,d 432 455 475 478,d 450 465 482 488,d 471 475 499 504,r 476 488 496 508,d 476 479 506 508,d 506 510 518 520,r 498 500 516 518,r 473 483 503 506,d 463 483 487 495,d 480 482 515 518,d 500 520 535 540,d 527 534 549 550,r 512 525 548 549,r 512 523 527 530,d 518 521 542 548,d 538 540 544 546,d 406 542 557 558,d 558 560 600 602,r 592 597 617 633,d 590 618 623 626,r 527 600 623 624' }
];
const bars = sheets.flatMap(s => s.bars.split(',').map(b => {
  const [dir, ...rows] = b.split(' ');
  const [high, top, bottom, low] = rows.map(r => 2000 + (s.base - r) * s.won);
  return { up: dir === 'r', high, top, bottom, low, close: dir === 'r' ? top : bottom };
}));

// Volume, in units of 285K shares.
const volume = bars.map((b, i) => i < 55 ? 2 : i < 67 ? 4 : i < 187 ? 6 : 3);
Object.entries({ 9: 7, 18: 8, 55: 15, 57: 38, 58: 10, 60: 12, 67: 55, 68: 80, 69: 65, 73: 119, 74: 21, 75: 87, 76: 17, 77: 33, 78: 12, 79: 12, 80: 44, 81: 17, 82: 9, 83: 13, 84: 20, 88: 13, 93: 16, 97: 6, 104: 4, 105: 3, 106: 3, 107: 3, 108: 3, 109: 66, 110: 30, 111: 28, 112: 14, 113: 10, 114: 10, 115: 9, 118: 56, 119: 42, 120: 14, 121: 23, 122: 11, 123: 9, 124: 8, 125: 13, 126: 8, 127: 133, 128: 91, 129: 38, 130: 136, 131: 61, 132: 38, 133: 15, 134: 40, 135: 23, 136: 10, 137: 10, 138: 37, 139: 10, 140: 31, 141: 10, 142: 10, 146: 19, 150: 29, 151: 16, 152: 10, 165: 63, 166: 14, 167: 9, 168: 40, 169: 10, 171: 16, 175: 23, 178: 10, 180: 8, 181: 38, 182: 20, 186: 9, 187: 6, 188: 6, 215: 59, 216: 8, 217: 38, 218: 10, 219: 7, 220: 6, 238: 23, 239: 5, 242: 11 })
  .forEach(([i, v]) => { volume[i] = v; });

const X = i => 34 + 12.7 * i;
const Y = p => 1088.7 + (7000 - p) * 0.0927;
const VB = 1798;
const line = (pts, color, w = 1) => `<polyline points="${pts.join(' ')}" fill="none" stroke="${color}" stroke-width="${w}" stroke-linejoin="round"/>`;
const average = (list, n, seed) => {
  const all = seed.concat(list);
  return list.map((_, i) => {
    const part = all.slice(Math.max(0, i + seed.length - n + 1), i + seed.length + 1);
    return part.reduce((a, b) => a + b, 0) / part.length;
  });
};
const seed = [...Array(10).fill(2270), ...Array(5).fill(2230), ...Array(5).fill(2060)];
const closes = bars.map(b => b.close);
const ma = (n, color, w) => line(average(closes, n, seed).map((v, i) => `${X(i).toFixed(1)},${Y(v).toFixed(1)}`), color, w);
const vma = (n, color, w) => line(average(volume, n, []).map((v, i) => `${X(i).toFixed(1)},${(VB - v).toFixed(1)}`), color, w);
const ma60 = '34,1510 65,1513 100,1520 145,1525 191,1529 230,1532 276,1534 337,1538 406,1539 475,1542 651,1542 750,1541 796,1537 880,1532 895,1530 930,1521 957,1512 972,1509 1003,1495 1048,1482 1110,1461 1140,1453 1152,1445 1200,1432 1220,1428 1255,1418 1339,1403 1389,1394 1424,1386 1487,1371 1543,1364 1592,1351 1648,1337 1711,1320 1781,1310 1837,1299 1887,1294 1964,1282 2020,1277 2111,1269 2146,1262 2202,1250 2250,1242 2266,1240 2301,1229 2337,1219 2394,1215 2437,1215 2487,1217 2516,1223 2573,1230 2630,1236 2673,1239 2744,1247 2801,1247 2823,1243 2894,1243 2944,1248 3001,1253 3044,1257 3080,1263 3107,1268';
const ma120 = '34,1491 92,1496 191,1503 306,1509 459,1514 612,1519 712,1521 796,1524 865,1527 926,1525 980,1520 1025,1511 1133,1495 1200,1486 1220,1484 1325,1472 1417,1464 1480,1458 1543,1452 1599,1442 1641,1436 1683,1425 1725,1415 1809,1391 1887,1374 1964,1358 2055,1342 2118,1333 2188,1317 2250,1307 2266,1304 2323,1293 2373,1281 2430,1273 2494,1268 2601,1266 2673,1266 2759,1263 2830,1259 2873,1255 2916,1250 2987,1249 3037,1245 3107,1245';

const RED = '#d23c20', BLUE = '#2460c0';
const rect = (x, y, w, h, f, extra = '') => `<rect x="${x}" y="${y}" width="${w}" height="${h}" fill="${f}" ${extra}/>`;
const text = (x, y, s, f, extra = '') => `<text x="${x}" y="${y}" fill="${f}" ${extra}>${s}</text>`;
const tip = (x, y) => `<path d="M${x} ${y}l-9 12h5v10h8v-10h5z" fill="#e0301c"/>`;
const box = x => rect(x, 1005, 6, 12, '#ddd', 'stroke="#888" stroke-width="2"');

const months = [[193, '2019/01'], [473, '02'], [689, '03'], [942, '04'], [1222, '05'], [1488, '06'], [1730, '07'], [2022, '08'], [2290, '09'], [2531, '10'], [2798, '11'], [3064, '12']];
let grid = '', axis = '', candles = '', vols = '';
for (let p = 1500; p <= 7500; p += 500) {
  const y = Math.round(Y(p));
  grid += `<path d="M28 ${y}H3170"/>`;
  axis += text(3184, y + 6, p.toLocaleString('en-US'), '#555c68');
}
for (let p = 1200; p <= 7400; p += 100) axis += `<path d="M3170 ${Math.round(Y(p))}h${p % 500 ? 4 : 10}" stroke="#777"/>`;
months.forEach(([x]) => { grid += `<path d="M${x} 997V1832"/>`; });
bars.forEach((b, i) => {
  const x = X(i), c = b.up ? RED : BLUE;
  const top = Y(b.top), h = Math.max(2, Y(b.bottom) - top);
  candles += rect((x - 1).toFixed(1), Y(b.high).toFixed(1), 2, (Y(b.low) - Y(b.high)).toFixed(1), c) +
    rect((x - 4).toFixed(1), top.toFixed(1), 8, h.toFixed(1), c);
  // A volume bar is red when it tops the day before; an even day follows its candle.
  const before = i ? volume[i - 1] : 0;
  const rising = volume[i] === before ? b.up : volume[i] > before;
  vols += rect((x - 4).toFixed(1), VB - volume[i], 8, volume[i], rising ? '#b8341c' : '#20509c');
});

$('chart').innerHTML = `
<defs>
  <linearGradient id="paper" x1="0" y1="0" x2="0" y2="1"><stop offset="0" stop-color="#fff"/><stop offset=".18" stop-color="#fdfdfd"/><stop offset=".5" stop-color="#e2e2e2"/><stop offset=".78" stop-color="#cacaca"/><stop offset="1" stop-color="#bcbcbc"/></linearGradient>
  <linearGradient id="scale" x1="0" y1="0" x2="0" y2="1"><stop offset="0" stop-color="#dbe4f2"/><stop offset=".5" stop-color="#c0cad9"/><stop offset="1" stop-color="#a4acb9"/></linearGradient>
</defs>
${rect(27, 996, 3256, 836, 'url(#paper)')}
<g stroke="#000" stroke-opacity=".13" stroke-width="2">${grid}<path d="M28 1728H3170"/></g>
${rect(3170, 996, 113, 836, 'url(#scale)')}${rect(27, 1801, 3256, 31, '#a2aab7')}
<path d="M27 997H3283V1832H27zM3170 996V1832M27 1638H3283M27 1801H3283" fill="none" stroke="#868a90" stroke-width="2"/>
<g stroke="#7d838c">${months.map(([x]) => `<path d="M${x} 1801v31"/>`).join('')}</g>
<path d="M3170 1658h4M3170 1671h4M3170 1685h4M3170 1700h4M3170 1714h4M3170 1728h10M3170 1742h4M3170 1756h4M3170 1770h4M3170 1784h4" stroke="#777"/>
${axis}
${text(3184, 1733, '20,000K', '#555c68')}
${candles}
${ma(5, '#a82ca0')}${ma(10, '#2a3c94', 2)}${ma(20, '#d9a62e', 4)}
<polyline points="${ma60}" fill="none" stroke="#3c8254" stroke-width="2"/>
<polyline points="${ma120}" fill="none" stroke="#868686" stroke-width="2"/>
${vols}${vma(5, '#a04a98', 2)}${vma(20, '#c09a3c', 2)}${vma(60, '#3c7a50', 2)}${vma(120, '#808080')}
${tip(884, 1518)}${tip(1418, 1438)}${tip(1646, 1341)}
<path d="M1653 1070h14" stroke="#e0301c" stroke-width="2"/><path d="M1669 1061v19l11-9z" fill="#e0301c"/>
<path d="M178 1565h14" stroke="#1c22c0" stroke-width="3"/><path d="M178 1555v20l-12-10z" fill="#1c22c0"/>
<g class="note">${text(1470, 1077, '최고 7,260 (06/25)', '#cf3c2c')}${text(192, 1571, '최저 1,825 (12/26)', '#2a2f9c')}</g>
${rect(46, 1000, 93, 25, '#e4e4e4', 'stroke="#bbb" stroke-width="2"')}${box(34)}${box(147)}${box(433)}${box(525)}
<g class="mono">
${text(51, 1019, '로보로보', '#444')}${text(166, 1019, '종가 단순 5', '#c050b4')}${text(288, 1019, '10', '#2a3c94')}${text(321, 1019, '20', '#dcb040')}${text(357, 1019, '60', '#3c8254')}${text(393, 1019, '120', '#888')}${text(453, 1019, '상한가', '#cf3c2c')}${text(542, 1019, '하한가', '#2a35b4')}
${rect(34, 1648, 6, 12, '#bbb', 'stroke="#777" stroke-width="2"')}${text(53, 1661, '거래량', '#3f8c90')}${text(130, 1661, '단순 5', '#a83fa0')}${text(204, 1661, '20', '#c89c38')}${text(238, 1661, '60', '#3c7a50')}${text(274, 1661, '120', '#777')}
${text(31, 1823, '2018/12', '#4c525c')}${months.map(([x, s]) => text(x + 3, 1823, s, '#4c525c')).join('')}${text(3185, 1823, '12/05', '#4c525c')}
</g>
${text(36, 1684, '3,129,865주(1,422.18%)', '#444')}
<g stroke="#444" fill="none" stroke-width="2"><path d="M38 1032h23v23H38zM42 1037h15v14H42zM47 1037v14M52 1037v14M42 1042h15"/></g>
${rect(3182, 1022, 98, 20, '#d9e2f0')}${text(3172, 1018, 'LC:135.62', '#cf4040')}${text(3172, 1038, 'HC:-40.77', '#3c68bc')}
${rect(3182, 1348, 98, 20, '#c6d0df')}${rect(3178, 1326, 102, 22, '#d8401e')}${text(3184, 1344, '4,300', '#f4dcd4')}${text(3184, 1366, '3.24%', '#cf4040')}
${rect(3178, 1755, 102, 22, '#c23a1c')}${text(3184, 1773, '3,130K', '#ecd4cc')}${text(3184, 1795, '1422.18%', '#b84040')}
${rect(3265, 1644, 15, 13, '#444b58')}<path d="M3269 1647l7 7M3276 1647l-7 7" stroke="#ccc" stroke-width="2"/>
${rect(3049, 1118, 19, 708, 'none', 'stroke="#f5432a" stroke-width="4"')}`;
```
